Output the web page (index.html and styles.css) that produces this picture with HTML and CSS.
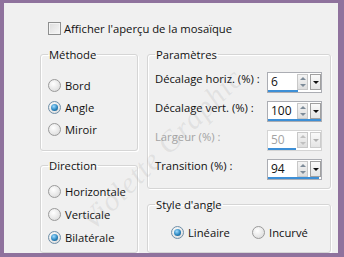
FILE: index.html
```html
<!DOCTYPE html>
<html lang="fr">
<head>
<meta charset="UTF-8" />
<title>Mosaïque</title>
<link rel="stylesheet" href="styles.css">
</head>
<body>
  <div class="frame">
    <label class="check-row"><span class="checkbox"></span>Afficher l'aperçu de la mosaïque</label>

    <div class="columns">
      <div class="col-left">
        <fieldset class="group group-method">
          <legend>Méthode</legend>
          <div class="radio-row"><span class="radio"></span>Bord</div>
          <div class="radio-row"><span class="radio checked"></span>Angle</div>
          <div class="radio-row"><span class="radio"></span>Miroir</div>
        </fieldset>

        <fieldset class="group group-direction">
          <legend>Direction</legend>
          <div class="radio-row tall"><span class="radio"></span>Horizontale</div>
          <div class="radio-row tall"><span class="radio"></span>Verticale</div>
          <div class="radio-row tall"><span class="radio checked"></span>Bilatérale</div>
        </fieldset>
      </div>

      <div class="col-right">
        <fieldset class="group group-params">
          <legend>Paramètres</legend>
          <div class="param-row">
            <span class="param-label">Décalage horiz. (%) :</span>
            <div class="spin">
              <div class="spin-main"><span class="spin-value">6</span><span class="spin-arrows"><i class="up"></i><i class="down"></i></span><span class="spin-drop"></span></div>
              <div class="spin-track"><span class="spin-bar" style="width: 30px"></span></div>
            </div>
          </div>
          <div class="param-row">
            <span class="param-label">Décalage vert. (%) :</span>
            <div class="spin">
              <div class="spin-main"><span class="spin-value">100</span><span class="spin-arrows"><i class="up"></i><i class="down"></i></span><span class="spin-drop"></span></div>
              <div class="spin-track"><span class="spin-bar" style="width: 100%"></span></div>
            </div>
          </div>
          <div class="param-row disabled">
            <span class="param-label">Largeur (%) :</span>
            <div class="spin">
              <div class="spin-main"><span class="spin-value">50</span><span class="spin-arrows"><i class="up"></i><i class="down"></i></span><span class="spin-drop"></span></div>
              <div class="spin-track"><span class="spin-bar" style="width: 28px"></span></div>
            </div>
          </div>
          <div class="param-row">
            <span class="param-label">Transition (%) :</span>
            <div class="spin">
              <div class="spin-main"><span class="spin-value">94</span><span class="spin-arrows"><i class="up"></i><i class="down"></i></span><span class="spin-drop"></span></div>
              <div class="spin-track"><span class="spin-bar" style="width: 96%"></span></div>
            </div>
          </div>
        </fieldset>

        <fieldset class="group group-style">
          <legend>Style d'angle</legend>
          <div class="radio-line">
            <div class="radio-row inline"><span class="radio checked"></span>Linéaire</div>
            <div class="radio-row"><span class="radio"></span>Incurvé</div>
          </div>
        </fieldset>
      </div>
    </div>

    <span class="watermark">Violette Graphic</span>
  </div>
</body>
</html>
```

FILE: styles.css
```css
body {
  margin: 0;
  background: #8f729d;
  font-family: 'Open Sans', 'Noto Sans', sans-serif;
  font-size: 11.25px;
  color: #111;
}

.frame {
  position: relative;
  overflow: hidden;
  margin: 3px 6px 0 4px;
  height: 250px;
  background: #f0f0f0;
  padding-left: 36px;
  box-sizing: border-box;
}

/* case à cocher du haut */
.check-row {
  display: flex;
  align-items: center;
  padding: 19px 0 0 8px;
  height: 13px;
  line-height: 13px;
}

.checkbox {
  width: 11px;
  height: 11px;
  border: 1px solid #8e8f8f;
  background: linear-gradient(135deg, #dcdcdc, #f7f7f7);
  box-shadow: inset 0 0 0 1px #f4f4f4;
  margin-right: 3px;
}

.columns {
  display: flex;
  gap: 9px;
  margin-top: 12px;
}

.col-left {
  width: 98px;
}

.col-right {
  width: 184px;
}

/* groupes */
.group {
  margin: 0;
  border: 1px solid #d5d5d5;
  border-radius: 3px;
  box-shadow: inset 1px 1px 0 #fff, 1px 1px 0 #fff;
  padding: 0 0 0 7px;
  min-width: 0;
}

.group legend {
  padding: 0 1px;
  line-height: 15px;
}

.group-method {
  padding-top: 12px;
  padding-bottom: 10px;
}

.group-direction {
  margin-top: 7px;
  padding-top: 7px;
  padding-bottom: 3px;
}

.group-params {
  padding: 10px 8px 8px 7px;
}

.group-style {
  margin-top: 8px;
  padding-top: 9px;
  padding-bottom: 9px;
}

/* boutons radio */
.radio-row {
  display: flex;
  align-items: center;
  height: 22px;
}

.radio-row.tall {
  height: 23px;
}

.radio-line {
  display: flex;
  padding-left: 16px;
}

.radio-row.inline {
  width: 81px;
}

.radio {
  width: 11px;
  height: 11px;
  border-radius: 50%;
  border: 1px solid #9a9a9a;
  background: radial-gradient(circle at 40% 35%, #ffffff, #e2e2e2 70%, #cfcfcf);
  margin-right: 4px;
  display: flex;
  align-items: center;
  justify-content: center;
}

.radio.checked {
  border-color: #6f8fa8;
}

.radio.checked::after {
  content: "";
  width: 7px;
  height: 7px;
  border-radius: 50%;
  background: radial-gradient(circle at 40% 35%, #9fdcff, #2a86c0 55%, #10466e);
}

/* paramètres */
.param-row {
  display: flex;
  align-items: flex-start;
  height: 21px;
  margin-bottom: 8px;
}

.param-row:last-child {
  margin-bottom: 0;
}

.param-label {
  flex: 1;
  line-height: 15px;
  margin-top: -1px;
  white-space: nowrap;
}

.spin {
  width: 53px;
  height: 19px;
  border: 1px solid #abadb3;
  background: #fff;
  display: flex;
  flex-direction: column;
}

.spin-main {
  display: flex;
  align-items: center;
  height: 16px;
  margin-top: 1px;
}

.spin-value {
  width: 26px;
  padding-left: 3px;
  line-height: 16px;
  font-size: 12px;
}

.spin-arrows {
  width: 9px;
  height: 14px;
  border: 1px solid #c8c8c8;
  background: linear-gradient(#f4f4f4, #dedede);
  display: flex;
  flex-direction: column;
  align-items: center;
  justify-content: space-around;
}

.spin-arrows i {
  width: 0;
  height: 0;
  border-left: 3px solid transparent;
  border-right: 3px solid transparent;
}

.spin-arrows .up {
  border-bottom: 3px solid #7e8c99;
}

.spin-arrows .down {
  border-top: 3px solid #7e8c99;
}

.spin-drop {
  width: 9px;
  height: 14px;
  margin-left: 2px;
  border: 1px solid #a0a0a0;
  background: linear-gradient(#fafafa, #e4e4e4);
  display: flex;
  align-items: center;
  justify-content: center;
}

.spin-drop::after {
  content: "";
  border-left: 3px solid transparent;
  border-right: 3px solid transparent;
  border-top: 3px solid #111;
}

.spin-track {
  height: 2px;
}

.spin-bar {
  display: block;
  height: 2px;
  background: #3d8fd6;
}

.disabled .param-label,
.disabled .spin-value {
  color: #a3a3a3;
}

.disabled .spin {
  border-color: #d4d4d4;
}

.disabled .spin-arrows .up {
  border-bottom-color: #c0c0c0;
}

.disabled .spin-arrows .down {
  border-top-color: #c0c0c0;
}

.disabled .spin-drop {
  border-color: #cccccc;
}

.disabled .spin-drop::after {
  border-top-color: #b0b0b0;
}

/* filigrane */
.watermark {
  position: absolute;
  left: 94px;
  top: 200px;
  font-family: 'Liberation Serif', serif;
  font-style: italic;
  font-size: 30px;
  letter-spacing: 1px;
  color: rgba(150, 150, 150, 0.16);
  transform: rotate(-45deg);
  transform-origin: left bottom;
  white-space: nowrap;
  pointer-events: none;
}
```
